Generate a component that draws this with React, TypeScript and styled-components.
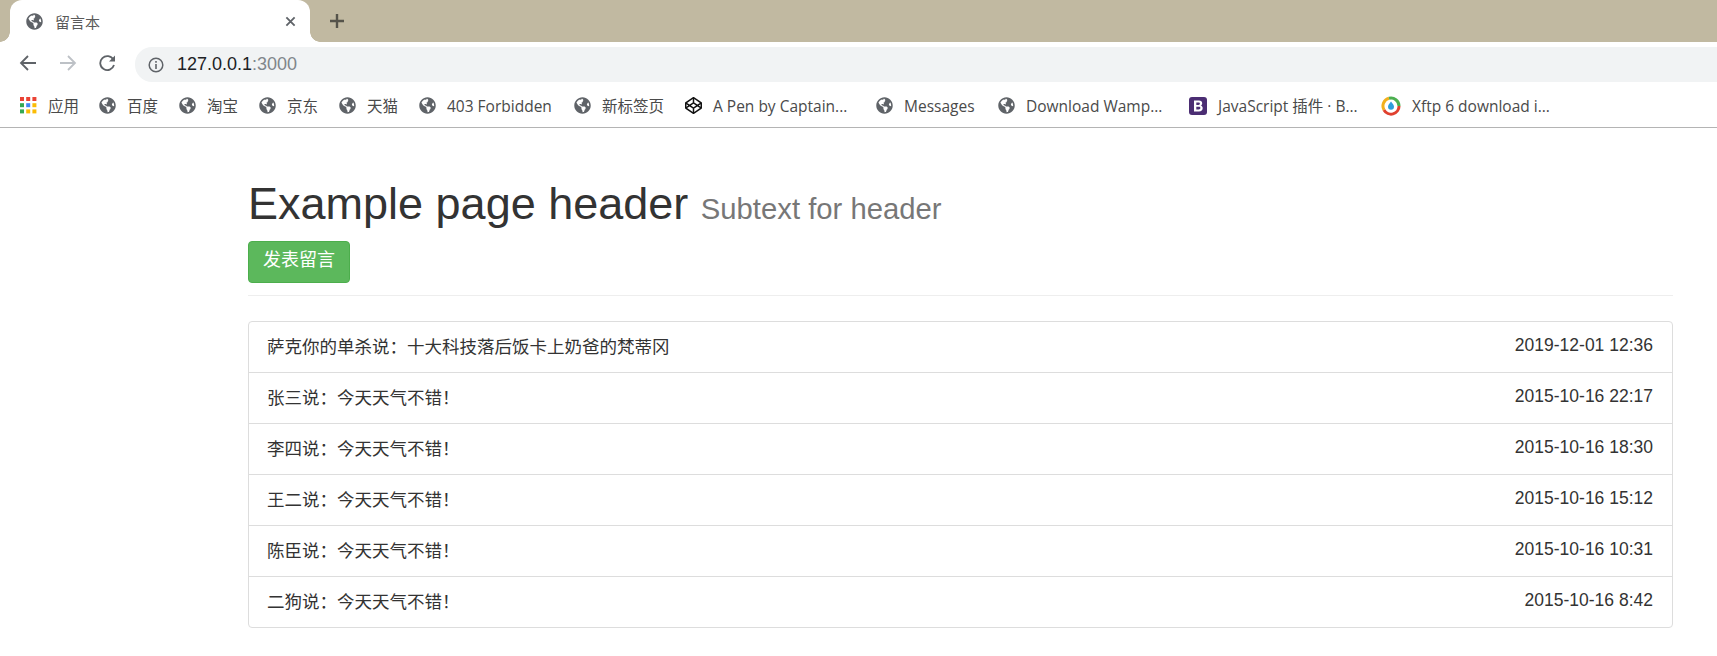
import React from "react";
import styled, { createGlobalStyle } from "styled-components";
import { FaGlobeAmericas, FaCodepen } from "react-icons/fa";

const Global = createGlobalStyle`
  html, body { margin: 0; padding: 0; background: #fff; overflow: hidden; }
  body { font-family: "Liberation Sans", "Noto Sans CJK SC", sans-serif; }
`;

const CJK = `"Liberation Sans", "Noto Sans CJK SC", sans-serif`;

const Page = styled.div`width: 1717px; height: 656px; overflow: hidden;`;

const TabStrip = styled.div`
  height: 42px; background: #c1b9a1; display: flex; align-items: flex-end; padding-left: 10px;
`;
const Tab = styled.div`
  position: relative; width: 300px; height: 42px; background: #fff;
  border-radius: 12px 12px 0 0; display: flex; align-items: center; box-sizing: border-box;
  padding: 0 14px 0 16px; color: #5f6368; font-size: 15px;
  &::before, &::after {
    content: ""; position: absolute; bottom: 0; width: 10px; height: 10px;
  }
  &::before { left: -10px; background: radial-gradient(circle at 0 0, #c1b9a1 9.5px, #fff 10px); }
  &::after { right: -10px; background: radial-gradient(circle at 100% 0, #c1b9a1 9.5px, #fff 10px); }
`;
const TabTitle = styled.span`margin-left: 12px; flex: 1; color: #5a5a5a;`;
const NewTab = styled.div`margin-left: 17px; width: 20px; height: 42px; display: flex; align-items: center; justify-content: center;`;

const Toolbar = styled.div`
  height: 42px; display: flex; align-items: center; padding-left: 16px;
`;
const NavButton = styled.div`width: 24px; height: 24px; display: flex; align-items: center; justify-content: center; margin-right: 16px;`;
const Omnibox = styled.div`
  flex: 1; height: 35px; margin: 3px 0 0 -1px; background: #f1f3f4; border-radius: 17px 0 0 17px;
  display: flex; align-items: center; padding-left: 13px; font-size: 18px; color: #202124;
`;
const Port = styled.span`color: #80868b;`;
const Host = styled.span`margin-left: 13px;`;

const Bookmarks = styled.div`
  height: 44px; box-sizing: border-box; border-bottom: 1px solid #b4b4b4; padding-left: 20px;
  display: flex; align-items: center; font-size: 15.5px; color: #4a4a4a;
  font-family: "Open Sans", "Noto Sans CJK SC", sans-serif;
`;
const Bookmark = styled.div<{ $w: number }>`
  width: ${(p) => p.$w}px; display: flex; align-items: center; flex: none; white-space: nowrap;
  span { margin-left: 11px; }
`;

const Main = styled.div`padding: 51px 44px 0 248px;`;
const Header = styled.div`padding-bottom: 12px; border-bottom: 1px solid #eee; margin-bottom: 25px;`;
const Title = styled.h1`
  margin: 0 0 7px; font-size: 45px; line-height: 50px; font-weight: 400; color: #333; font-family: ${CJK};
`;
const Sub = styled.small`font-size: 29.25px; color: #777; font-weight: 400;`;
const PostButton = styled.a`
  display: block; width: 102px; height: 42px; box-sizing: border-box; line-height: 36px; text-align: center;
  background: #5cb85c; border: 1px solid #4cae4c; border-radius: 4px; color: #fff; font-size: 18px;
`;
const List = styled.ul`
  margin: 0; padding: 0; list-style: none; border: 1px solid #ddd; border-radius: 4px; box-sizing: border-box;
`;
const Row = styled.li`
  height: 51px; box-sizing: border-box; display: flex; justify-content: space-between; align-items: center;
  padding: 0 19px 3px 18px; font-size: 17.5px; color: #333;
  border-top: 1px solid #ddd;
  &:first-child { border-top: 0; height: 50px; }
`;

const globe = <FaGlobeAmericas size={17} color="#5f6368" />;

const Apps = () => (
  <svg width="17" height="17" viewBox="0 0 17 17">
    {[["#ea4335", "#ea4335", "#ea4335"], ["#34a853", "#4285f4", "#fbbc05"], ["#34a853", "#fbbc05", "#fbbc05"]].map((r, y) =>
      r.map((c, x) => <rect key={`${x}${y}`} x={x * 6.2} y={y * 6.2} width="4" height="4" fill={c} />)
    )}
  </svg>
);

const BootstrapIcon = () => (
  <svg width="18" height="18" viewBox="0 0 18 18">
    <rect width="18" height="18" rx="3" fill="#4b2d73" />
    <path fill="#fff" fillRule="evenodd" d="M5 3.5h5c2 0 3.2 1 3.2 2.7 0 1.1-.6 1.9-1.5 2.3 1.2.3 2 1.2 2 2.6 0 2-1.4 3.4-3.7 3.4H5zm2.3 2v2.4h2.2c.9 0 1.4-.4 1.4-1.2s-.5-1.2-1.4-1.2zm0 4.3v2.7h2.5c1 0 1.6-.5 1.6-1.4s-.6-1.3-1.6-1.3z" />
  </svg>
);

const XftpIcon = () => (
  <svg width="20" height="20" viewBox="0 0 20 20" fill="none">
    <path d="M3 14A8 8 0 0 1 8 2.3" stroke="#f2b01e" strokeWidth="3" />
    <path d="M8 2.3A8 8 0 0 1 18 10" stroke="#4caf50" strokeWidth="3" />
    <path d="M18 10A8 8 0 0 1 3 14" stroke="#e0402e" strokeWidth="3" />
    <path d="M10 5.5c2 2.400 3 3.800 3 5.300a3 3 0 0 1-6 0c0-1.500 1-2.900 3-5.300z" fill="#2d9cdb" />
  </svg>
);

const marks: [number, React.ReactNode, string][] = [
  [79, <Apps />, "应用"],
  [80, globe, "百度"],
  [80, globe, "淘宝"],
  [80, globe, "京东"],
  [80, globe, "天猫"],
  [155, globe, "403 Forbidden"],
  [111, globe, "新标签页"],
  [191, <FaCodepen size={17} color="#111" />, "A Pen by Captain..."],
  [122, globe, "Messages"],
  [191, globe, "Download Wamp..."],
  [192, <BootstrapIcon />, "JavaScript 插件 · B..."],
  [170, <XftpIcon />, "Xftp 6 download i..."],
];

const rows: [string, string][] = [
  ["萨克你的单杀说：十大科技落后饭卡上奶爸的梵蒂冈", "2019-12-01 12:36"],
  ["张三说：今天天气不错！", "2015-10-16 22:17"],
  ["李四说：今天天气不错！", "2015-10-16 18:30"],
  ["王二说：今天天气不错！", "2015-10-16 15:12"],
  ["陈臣说：今天天气不错！", "2015-10-16 10:31"],
  ["二狗说：今天天气不错！", "2015-10-16 8:42"],
];

export default function App() {
  return (
    <Page>
      <Global />
      <TabStrip>
        <Tab>
          {globe}
          <TabTitle>留言本</TabTitle>
          <svg width="11" height="11" viewBox="0 0 12 12"><path d="M1.500 1.500l9 9M10.500 1.500l-9 9" stroke="#5f6368" strokeWidth="2" /></svg>
        </Tab>
        <NewTab>
          <svg width="16" height="16" viewBox="0 0 16 16"><path d="M8 1v14M1 8h14" stroke="#55534a" strokeWidth="2.400" /></svg>
        </NewTab>
      </TabStrip>
      <Toolbar>
        <NavButton>
          <svg width="18" height="18" viewBox="0 0 18 18" fill="none"><path d="M17 9H2M9 2L2 9l7 7" stroke="#5f6368" strokeWidth="1.800" /></svg>
        </NavButton>
        <NavButton>
          <svg width="18" height="18" viewBox="0 0 18 18" fill="none"><path d="M1 9h15M9 2l7 7-7 7" stroke="#bdc1c6" strokeWidth="1.800" /></svg>
        </NavButton>
        <NavButton>
          <svg width="18" height="18" viewBox="0 0 18 18" fill="none"><path d="M15 11a7 7 0 1 1-.6-5.300" stroke="#5f6368" strokeWidth="1.800" /><path d="M16 1.500v6h-6z" fill="#5f6368" /></svg>
        </NavButton>
        <Omnibox>
          <svg width="16" height="16" viewBox="0 0 16 16" fill="none"><circle cx="8" cy="8" r="6.800" stroke="#5f6368" strokeWidth="1.500" /><path d="M8 7v5M8 4v1.700" stroke="#5f6368" strokeWidth="1.600" /></svg>
          <Host>127.0.0.1<Port>:3000</Port></Host>
        </Omnibox>
      </Toolbar>
      <Bookmarks>
        {marks.map(([w, icon, label]) => (
          <Bookmark key={label} $w={w}>{icon}<span>{label}</span></Bookmark>
        ))}
      </Bookmarks>
      <Main>
        <Header>
          <Title>Example page header <Sub>Subtext for header</Sub></Title>
          <PostButton>发表留言</PostButton>
        </Header>
        <List>
          {rows.map(([text, time]) => (
            <Row key={text}><span>{text}</span><span>{time}</span></Row>
          ))}
        </List>
      </Main>
    </Page>
  );
}
